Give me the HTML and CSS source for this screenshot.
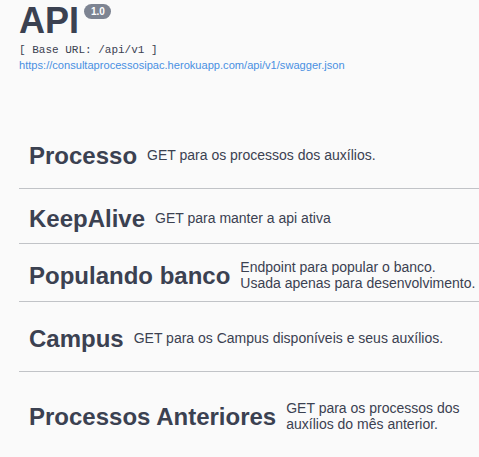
FILE: index.html
```html
<!DOCTYPE html>
<html lang="pt">
<head>
<meta charset="utf-8">
<title>API</title>
<link rel="stylesheet" href="styles.css">
</head>
<body>
<div class="wrapper">
  <div class="info">
    <h2 class="title">API <span class="version">1.0</span></h2>
    <pre class="base-url">[ Base URL: /api/v1 ]</pre>
    <a class="link" href="#">https://consultaprocessosipac.herokuapp.com/api/v1/swagger.json</a>
  </div>
  <div class="tags">
    <div class="tag tag-first">
      <h4 class="tag-name">Processo</h4>
      <div class="tag-desc">GET para os processos dos auxílios.</div>
    </div>
    <div class="tag">
      <h4 class="tag-name">KeepAlive</h4>
      <div class="tag-desc">GET para manter a api ativa</div>
    </div>
    <div class="tag">
      <h4 class="tag-name">Populando banco</h4>
      <div class="tag-desc">Endpoint para popular o banco. Usada apenas para desenvolvimento.</div>
    </div>
    <div class="tag tag-roomy">
      <h4 class="tag-name">Campus</h4>
      <div class="tag-desc">GET para os Campus disponíveis e seus auxílios.</div>
    </div>
    <div class="tag tag-last">
      <h4 class="tag-name">Processos Anteriores</h4>
      <div class="tag-desc">GET para os processos dos auxílios do mês anterior.</div>
    </div>
  </div>
</div>
</body>
</html>
```
FILE: styles.css
```css
html, body {
  margin: 0;
  background: #fafafa;
}
body {
  font-family: "Liberation Sans", Arial, sans-serif;
  color: #3b4151;
}
.wrapper {
  padding: 0 0 0 19px;
}
.title {
  display: flex;
  align-items: flex-start;
  margin: 0;
  font-size: 36px;
  line-height: 42px;
  font-weight: 700;
  color: #3b4151;
}
.version {
  margin: 4px 0 0 5px;
  padding: 2px 6px 2px 7px;
  border-radius: 57px;
  background: #7d8492;
  color: #fff;
  font-size: 10px;
  line-height: 11px;
  font-weight: 700;
}
.base-url {
  margin: 2px 0 0;
  font-family: "Liberation Mono", monospace;
  font-size: 11px;
  line-height: 13px;
  color: #3b4151;
}
.link {
  display: block;
  margin-top: 2px;
  font-size: 11.1px;
  line-height: 13px;
  color: #4990e2;
  text-decoration: none;
}
.tags {
  margin-top: 50px;
}
.tag {
  display: flex;
  align-items: center;
  padding: 16px 0 10px 10px;
  border-bottom: 1px solid #c1c3c7;
}
.tag-first {
  padding-top: 20px;
  padding-bottom: 18px;
}
.tag-roomy {
  padding-top: 23px;
  padding-bottom: 18px;
}
.tag-last {
  padding-top: 29px;
  padding-bottom: 30px;
}
.tag-name {
  margin: 0;
  flex-shrink: 0;
  white-space: nowrap;
  font-size: 24px;
  line-height: 28px;
  font-weight: 700;
  color: #3b4151;
}
.tag-desc {
  flex: 1;
  padding-left: 10px;
  font-size: 14px;
  line-height: 15.5px;
  color: #3b4151;
}
```
